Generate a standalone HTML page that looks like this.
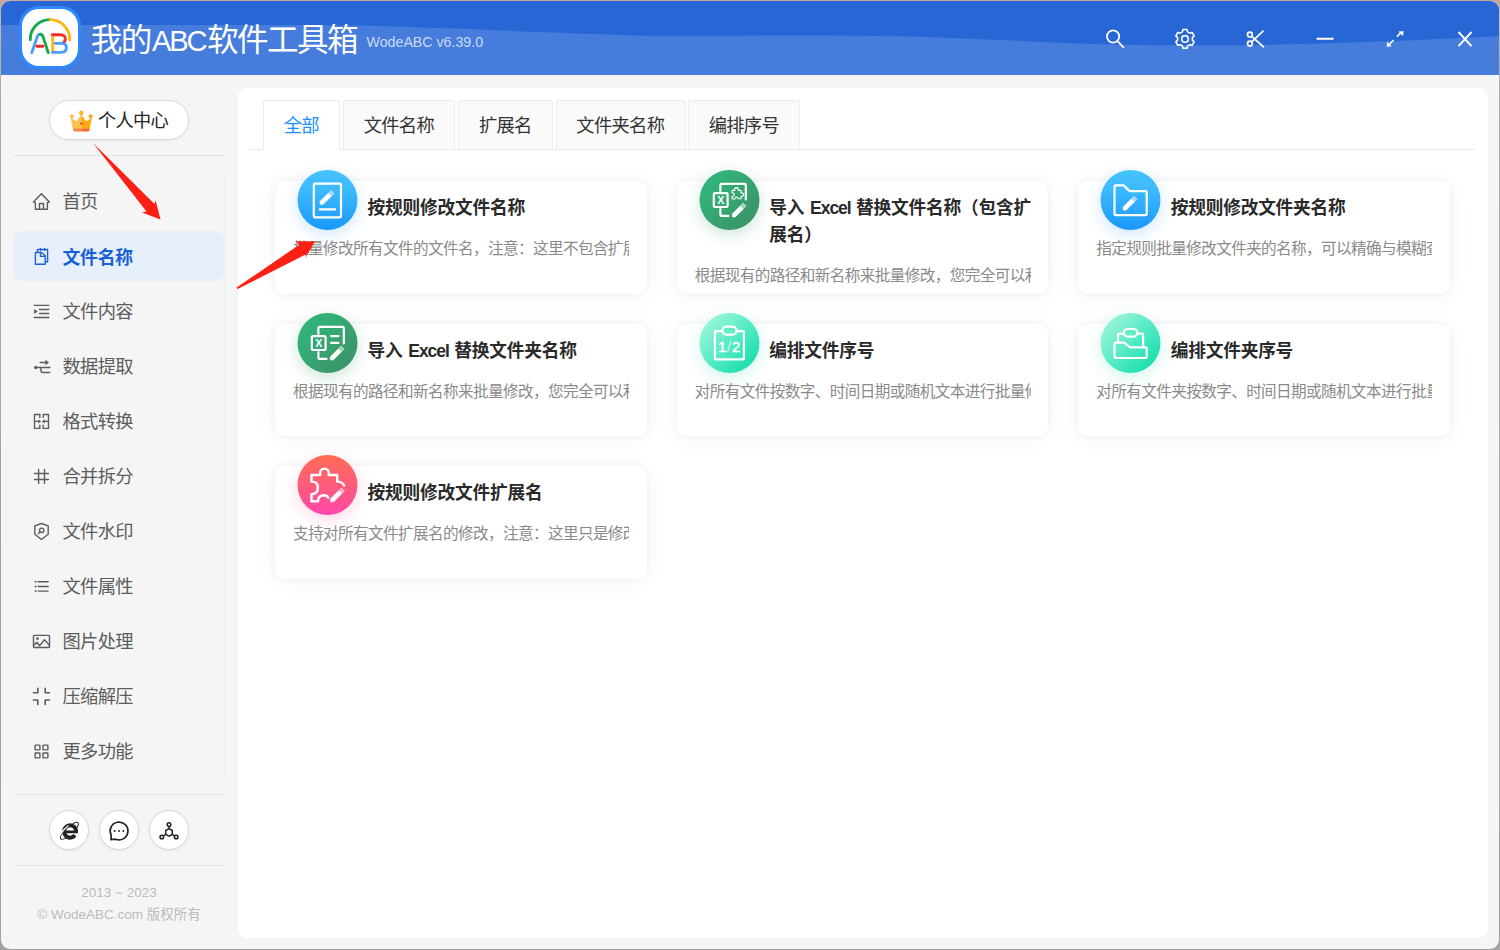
<!DOCTYPE html>
<html lang="zh-CN">
<head>
<meta charset="utf-8">
<title>我的ABC软件工具箱</title>
<style>
*{box-sizing:border-box;margin:0;padding:0}
html,body{width:1500px;height:950px;overflow:hidden}
body{background:linear-gradient(180deg,#c6a7a0 0,#c6a7a0 10px,#c8b9a8 14px,#aaa6a2 120px,#a2a2a2 100%);font-family:"Liberation Sans","Noto Sans CJK SC",sans-serif;position:relative;color:#333}
.abs{position:absolute}
#win{position:absolute;left:1px;top:1px;width:1498px;height:948px;background:#f5f5f5;border-radius:9px;overflow:hidden}
#hdr{position:absolute;left:0;top:0;width:1498px;height:74px;background:#2866d6;overflow:hidden}
#hdr svg.wave{position:absolute;left:0;top:0}
#logo{position:absolute;left:18px;top:5px;width:62px;height:63px;border-radius:20px;background:#2f89fc}
#logo .in{position:absolute;left:3px;top:3px;right:3px;bottom:3px;border-radius:17px;background:#fdfdfe}
#ttl{position:absolute;left:89.8px;top:17px;height:44px;line-height:44px;font-size:31.6px;letter-spacing:-1.6px;color:#fff;white-space:nowrap}
#ttl .l{font-size:29.2px;letter-spacing:-2.2px;margin-left:1.2px;margin-right:1.7px}
#ver{position:absolute;left:365.6px;top:30.7px;font-size:14.2px;line-height:20px;color:#c9d9f5;white-space:nowrap}
.hi{position:absolute;top:18px;width:40px;height:40px}
#pill{position:absolute;left:48px;top:99px;width:140px;height:40px;border:1px solid #dadada;border-radius:20px;background:#fff;box-shadow:0 1px 3px rgba(0,0,0,.05)}
#pill span{position:absolute;left:48px;top:1px;line-height:38px;font-size:18.2px;letter-spacing:-0.7px;color:#222;white-space:nowrap}
.hr{position:absolute;left:12px;width:212px;height:1px;background:#e4e4e4}
.nav{position:absolute;left:12px;width:211px;height:50px;border-radius:9px}
.nav.on{background:#e8effc}
.nav span{position:absolute;left:49.5px;top:1px;line-height:50px;font-size:18.3px;letter-spacing:-0.7px;color:#5c5c5c;white-space:nowrap}
.nav.on span{color:#1761d6;font-weight:700;font-size:17.8px;letter-spacing:-0.2px;top:1.5px}
.nav svg{position:absolute;left:18px;top:15px;width:20px;height:20px;fill:none;stroke:#5a5d62;stroke-width:1.4}
.nav.on svg{stroke:#1f62d0}
.circ{position:absolute;top:809px;width:40px;height:40px;border-radius:50%;background:#fff;border:1px solid #d8d8d8;box-shadow:0 1px 3px rgba(0,0,0,.06)}
.foot{position:absolute;left:12px;width:212px;text-align:center;font-size:13.5px;color:#bbb;white-space:nowrap;line-height:20px}
#vline{position:absolute;left:223px;top:170px;width:1px;height:608px;background:#efefef}
#main{position:absolute;left:237px;top:87px;width:1250px;height:850px;background:#fff;border-radius:9px}
.tab{position:absolute;top:99px;height:49px;border:1px solid #ededed;border-bottom:none;background:#fafafa;font-size:18.3px;letter-spacing:-0.7px;text-indent:-0.4px;line-height:50px;text-align:center;color:#333;border-radius:3px 3px 0 0;white-space:nowrap}
.tab.on{background:#fff;color:#1e8fff;height:50px;border-color:#ebebeb}
#tabline{position:absolute;left:249px;top:148px;width:1226px;height:1px;background:#ebebeb}
.card{position:absolute;width:371.7px;height:112.6px;background:#fff;border-radius:10px;box-shadow:0 0 8px rgba(0,0,0,.05),0 2px 26px rgba(0,0,0,.04)}
.card .t{position:absolute;left:92.5px;top:14.4px;width:268px;font-size:17.7px;letter-spacing:-0.2px;line-height:27px;font-weight:700;color:#2a2a2a}
.card .t .e{letter-spacing:-1.05px;font-size:17.5px;margin:0 0.8px 0 1.1px}
.card .d{position:absolute;left:18px;width:336px;font-size:15.6px;letter-spacing:-0.6px;line-height:20px;color:#8a8a8a;white-space:nowrap;overflow:hidden}
.ic{position:absolute;left:22px;transform:translateX(0.5px);top:-11px;width:60px;height:60px;border-radius:50%}
.ic svg{position:absolute;left:0;top:0;width:60px;height:60px}
.ic.blue{background:linear-gradient(180deg,#47c3ff 0%,#3cb8fe 35%,#1a98fc 100%);box-shadow:0 5px 16px rgba(40,150,250,.22)}
.ic.green{background:linear-gradient(135deg,#2fba7f 0%,#35a873 45%,#3c8d62 100%);box-shadow:0 5px 16px rgba(50,150,100,.24)}
.ic.mint{background:linear-gradient(135deg,#b0f8e3 0%,#7cf0d1 30%,#48e8c1 58%,#10dba7 96%);box-shadow:0 5px 16px rgba(40,220,170,.22)}
.ic.pink{background:linear-gradient(180deg,#ff6b54 0%,#ff5c7a 50%,#ff46ac 100%);box-shadow:0 5px 16px rgba(255,80,140,.22)}
</style>
</head>
<body>
<div id="win">
  <div id="hdr">
    <svg class="wave" width="1498" height="74" viewBox="0 0 1498 74"><path d="M0.0,24.0 C33.2,24.0 142.5,24.0 199.0,24.0 C255.5,24.0 299.0,23.7 339.0,24.2 C379.0,24.7 405.7,25.9 439.0,27.0 C472.3,28.1 505.7,29.8 539.0,31.0 C572.3,32.2 609.0,33.8 639.0,34.4 C669.0,35.0 692.3,34.8 719.0,34.8 C745.7,34.8 769.0,34.3 799.0,34.4 C829.0,34.5 865.7,34.5 899.0,35.3 C932.3,36.1 965.7,37.7 999.0,39.0 C1032.3,40.3 1065.7,42.3 1099.0,43.2 C1132.3,44.1 1165.7,44.6 1199.0,44.6 C1232.3,44.6 1265.7,43.8 1299.0,43.0 C1332.3,42.2 1365.8,41.1 1399.0,39.8 C1432.2,38.5 1481.5,35.8 1498.0,35.0 L1498,74 L0,74 Z" fill="#467cdc"/></svg>
    <div id="logo"><div class="in"></div><svg class="abs" style="left:0;top:0" width="62" height="63" viewBox="0 0 62 63" fill="none" stroke-width="2.9" stroke-linecap="round" stroke-linejoin="round">
<path d="M11.3,33.8 A19.7,19.7 0 0 1 31,13.6" stroke="#14a84b"/>
<path d="M31,13.6 A19.7,19.7 0 0 1 50.7,33.8" stroke="#fbb815"/>
<path d="M12.8,46.6 L18.4,30.4 Q19.6,27.9 21.2,28.2" stroke="#4a9dff"/>
<path d="M21.2,28.2 Q23,28 24,30.6 L29.2,46.6" stroke="#17a84c"/>
<path d="M18,40.2 H23.8" stroke="#fb2222"/>
<path d="M33.7,29.4 V46" stroke="#fbb815"/>
<path d="M33.4,28.8 H41 Q46.6,28.9 46.3,33.2 Q46,36 44.4,36.6" stroke="#fb2a2a"/>
<path d="M36.3,37.4 H42.6 Q47.6,37.6 47.4,42 Q47.2,46.4 42,46.4 H33.6" stroke="#4a9dff"/>
</svg></div>
    <div id="ttl">我的<span class="l">ABC</span>软件工具箱</div>
    <div id="ver">WodeABC v6.39.0</div>

    <svg class="hi" style="left:1094px" viewBox="0 0 40 40" fill="none" stroke="#fff" stroke-width="1.8" stroke-linecap="round"><circle cx="18.1" cy="17.5" r="6.1"/><path d="M22.6,22.1 L28.4,28.3"/></svg>
    <svg class="hi" style="left:1164px" viewBox="0 0 40 40" fill="none" stroke="#fff" stroke-width="1.6" stroke-linejoin="round"><circle cx="20" cy="19.9" r="3.3"/><path d="M22.00,10.51 L18.00,10.51 L17.43,12.85 L15.18,14.15 L12.87,13.48 L10.87,16.93 L12.61,18.60 L12.61,21.20 L10.87,22.87 L12.87,26.32 L15.18,25.65 L17.43,26.95 L18.00,29.29 L22.00,29.29 L22.57,26.95 L24.82,25.65 L27.13,26.32 L29.13,22.87 L27.39,21.20 L27.39,18.60 L29.13,16.93 L27.13,13.48 L24.82,14.15 L22.57,12.85 Z"/></svg>
    <svg class="hi" style="left:1234px" viewBox="0 0 40 40" fill="none" stroke="#fff" stroke-width="1.75" stroke-linecap="round"><circle cx="14.9" cy="15.6" r="2.4"/><circle cx="14.9" cy="24.6" r="2.4"/><path d="M16.7,17.3 L28.5,27.9 M16.7,22.9 L28,12.2"/></svg>
    <svg class="hi" style="left:1304px" viewBox="0 0 40 40" fill="none" stroke="#fff" stroke-width="2"><path d="M11.6,19.8 H28.5"/></svg>
    <svg class="hi" style="left:1374px" viewBox="0 0 40 40" fill="#fff" stroke="#fff" stroke-width="1.6"><path d="M21.8,17.8 L26,13.6 M18.6,21 L14.4,25.2" fill="none"/><path d="M24,12.8 L28.2,12.4 L27.8,16.6 Z M12.4,23.2 L12,27.4 L16.2,27 Z" stroke-width="0.6"/></svg>
    <svg class="hi" style="left:1444px" viewBox="0 0 40 40" fill="none" stroke="#fff" stroke-width="1.9"><path d="M13.5,13 L26.5,27.2 M26.5,13 L13.5,27.2"/></svg>
  </div>

  <div id="pill"><svg class="abs" style="left:19px;top:9px" width="24" height="22" viewBox="0 0 24 22"><path d="M1.6,7.6 L7.4,11.6 L12.3,4.6 L12.3,18.8 L3.8,18.8 Z" fill="#fcc250"/><path d="M12.3,4.6 L17.2,11.6 L23,7.6 L20.8,18.8 L12.3,18.8 Z" fill="#ffaa0c"/><path d="M3.8,18.6 H12.3 V21.4 H6 Q4.2,21.4 4,20 Z" fill="#f8853e"/><path d="M12.3,18.6 H20.8 L20.6,20 Q20.4,21.4 18.6,21.4 H12.3 Z" fill="#f26a2a"/><circle cx="2.9" cy="6.3" r="2" fill="#fcc250"/><circle cx="12.3" cy="2.9" r="2.3" fill="#fdb52c"/><circle cx="21.7" cy="6.3" r="2" fill="#ffaa0c"/><ellipse cx="12.3" cy="13.4" rx="1.3" ry="1" fill="#e8392c"/></svg><span>个人中心</span></div>
  <div class="hr" style="top:154px"></div>
  <div id="vline"></div>
  <div class="nav" style="top:175px"><svg viewBox="0 0 20 20"><path d="M4.4,18.2 V11.7 L2.4,11.1 L10.4,2.7 L18.4,11.1 L16.4,11.7 V18.2 Z M8.5,18.2 V12.5 H12.5 V18.2" stroke-linejoin="round"/></svg><span>首页</span></div>
  <div class="nav on" style="top:230px"><svg viewBox="0 0 20 20"><path d="M4.4,6.5 H10.7 L14.2,9.8 V18.3 H4.4 Z M9.5,6.5 V10.4 H14.2 M6.5,6.5 V3.5 H16.6 V15.8 H14.2 M9.5,2.4 V4.6 M13.6,2.4 V4.6" stroke-linejoin="round" stroke-linecap="round"/></svg><span>文件名称</span></div>
  <div class="nav" style="top:285px"><svg viewBox="0 0 20 20"><path d="M3.2,4.4 H17.8 M8.5,8.5 H17.8 M8.5,12.5 H17.8 M3.2,16.5 H17.8" stroke-linecap="round"/><path d="M3.2,7.9 V12.9 L6.8,10.4 Z" fill="#5a5d62" stroke="none"/></svg><span>文件内容</span></div>
  <div class="nav" style="top:340px"><svg viewBox="0 0 20 20"><circle cx="4.7" cy="11.5" r="1.7" fill="#5a5d62" stroke="none"/><path d="M4.7,11.5 H18.9 M9.9,11.5 V14.3 Q9.9,16.5 12.2,16.5 H18.9 M9.2,6.5 H15" stroke-linecap="round"/><path d="M14.4,3.8 V9.3 L18,6.5 Z" fill="#5a5d62" stroke="none"/></svg><span>数据提取</span></div>
  <div class="nav" style="top:395px"><svg viewBox="0 0 20 20"><path d="M8.8,6.6 V3.5 H3.5 V17.4 H8.8 V14.2 M3.5,10.4 H8 M12.2,6.6 V3.5 H17.5 V17.4 H12.2 V14.2 M17.5,10.4 H13" stroke-linejoin="round" stroke-linecap="round"/><path d="M7.3,8.2 V12.6 L10.1,10.4 Z M13.7,8.2 V12.6 L10.9,10.4 Z" fill="#5a5d62" stroke="none"/></svg><span>格式转换</span></div>
  <div class="nav" style="top:450px"><svg viewBox="0 0 20 20"><path d="M7.6,3.5 V17.4 M13.5,3.5 V17.4 M3.5,7.5 H17.4 M3.5,13.5 H17.4" stroke-linecap="round"/></svg><span>合并拆分</span></div>
  <div class="nav" style="top:505px"><svg viewBox="0 0 20 20"><path d="M10.4,2.5 L17.2,4.8 V13.3 L10.4,18.5 L3.8,13.3 V4.8 Z" stroke-linejoin="round"/><circle cx="10.7" cy="9.3" r="2.2"/><path d="M9.1,10.9 L7.3,12.8" stroke-linecap="round"/></svg><span>文件水印</span></div>
  <div class="nav" style="top:560px"><svg viewBox="0 0 20 20"><path d="M7.1,5.75 H17.2 M7.1,10.5 H17.2 M7.1,15.1 H17.2" stroke-linecap="round"/><circle cx="4.6" cy="5.75" r="1" fill="#5a5d62" stroke="none"/><circle cx="4.6" cy="10.5" r="1" fill="#5a5d62" stroke="none"/><circle cx="4.6" cy="15.1" r="1" fill="#5a5d62" stroke="none"/></svg><span>文件属性</span></div>
  <div class="nav" style="top:615px"><svg viewBox="0 0 20 20"><rect x="2.5" y="4.4" width="16" height="12.1" rx="0.8"/><circle cx="6.5" cy="7.6" r="1.4" fill="#5a5d62" stroke="none"/><path d="M2.5,14.5 L5.8,11.2 L8.5,14.7 L13.5,8.7 L18.5,14.5" stroke-linejoin="round"/></svg><span>图片处理</span></div>
  <div class="nav" style="top:670px"><svg viewBox="0 0 20 20"><path d="M6.8,2.4 V6.8 H2.4 M14.2,2.4 V6.8 H18.5 M2.4,14 H6.8 V18.5 M18.5,14 H14.2 V18.5" stroke-linecap="round" stroke-linejoin="round" stroke-width="1.6"/></svg><span>压缩解压</span></div>
  <div class="nav" style="top:725px"><svg viewBox="0 0 20 20"><rect x="4.1" y="4.1" width="4.8" height="4.8" rx="0.3"/><rect x="12" y="4.1" width="4.9" height="4.8" rx="0.3"/><rect x="4.1" y="12" width="4.8" height="4.9" rx="0.3"/><rect x="12" y="12" width="4.9" height="4.9" rx="0.3"/></svg><span>更多功能</span></div>

  <div class="hr" style="top:793px"></div>
  <div class="circ" style="left:48px"><svg class="abs" style="left:-1px;top:-1px" width="40" height="40" viewBox="0 0 40 40" fill="none" stroke="#222"><g transform="translate(20.4 20.8) rotate(-43)"><path d="M-5,-3.35 A11.8,3.7 0 0 0 -5,3.35 M7,-2.98 A11.8,3.7 0 0 1 7,2.98" stroke-width="1"/></g><path d="M29,21.9 H15.6" stroke-width="2.7"/><path d="M27.1,21.6 A6,6.2 0 1 0 25.9,25.2" stroke-width="3.9"/><g transform="translate(20.4 20.8) rotate(-43)"><path d="M-9,-3.3 A11.8,3.7 0 0 1 3,-4.5" stroke="#fff" stroke-width="1.1"/></g></svg></div>
  <div class="circ" style="left:98px"><svg class="abs" style="left:-1px;top:-1px" width="40" height="40" viewBox="0 0 40 40" fill="none" stroke="#222" stroke-width="1.7" stroke-linejoin="round"><path d="M12,29.6 L12.2,25.2 A8.9,8.9 0 1 1 16.6,29.2 Z"/><circle cx="15.6" cy="21" r="1" fill="#222" stroke="none"/><circle cx="20" cy="21" r="1" fill="#222" stroke="none"/><circle cx="24.4" cy="21" r="1" fill="#222" stroke="none"/></svg></div>
  <div class="circ" style="left:148px"><svg class="abs" style="left:-1px;top:-1px" width="40" height="40" viewBox="0 0 40 40" fill="none" stroke="#222" stroke-width="1.5" stroke-linejoin="round"><path d="M20,18.6 L23.3,20.5 V24.3 L20,26.2 L16.7,24.3 V20.5 Z M20,18.6 V16.4 M23.3,24.3 L25.6,25.8 M16.7,24.3 L14.4,25.8"/><circle cx="20" cy="14.6" r="1.8"/><circle cx="27.2" cy="27" r="1.8"/><circle cx="12.8" cy="27" r="1.8"/></svg></div>
  <div class="hr" style="top:864px"></div>
  <div class="foot" style="top:882px">2013 ~ 2023</div>
  <div class="foot" style="top:904px">© WodeABC.com 版权所有</div>

  <div id="main"></div>
  <div id="tabline"></div>
  <div class="tab on" style="left:262px;width:77px">全部</div>
  <div class="tab" style="left:342px;width:112px">文件名称</div>
  <div class="tab" style="left:457px;width:95px">扩展名</div>
  <div class="tab" style="left:554.5px;width:130px">文件夹名称</div>
  <div class="tab" style="left:687px;width:112px">编排序号</div>

  <div class="card" style="left:274px;top:180px"><div class="ic blue"><svg viewBox="0 0 60 60"><rect x="16.3" y="13.7" width="27.2" height="33.6" rx="1.2" fill="none" stroke="#fff" stroke-width="2.2" stroke-linejoin="round" stroke-linecap="round"/><path d="M22.3,39.4 H37.7" fill="none" stroke="#fff" stroke-width="2.2" stroke-linejoin="round" stroke-linecap="round"/><path d="M22.7,34.3 L22.7,31.3 L30.7,23.3 L33.7,26.3 L25.7,34.3 Z" fill="#fff" stroke="#fff" stroke-width="0.7" stroke-linejoin="round"/><path d="M31.1,22.9 L33.5,20.5 L36.5,23.5 L34.1,25.9 Z" fill="#fff" fill-opacity="0.5" stroke="#fff" stroke-opacity="0.5" stroke-width="1" stroke-linejoin="round"/></svg></div><div class="t">按规则修改文件名称</div><div class="d" style="top:58px">批量修改所有文件的文件名，注意：这里不包含扩展名</div></div>
  <div class="card" style="left:675.8px;top:180px"><div class="ic green"><svg viewBox="0 0 60 60"><path d="M20.9,21 V15.1 Q20.9,13.9 22.1,13.9 H45.1 Q46.3,13.9 46.3,15.1 V29.5 M20.9,39.2 V44.7 Q20.9,45.9 22.1,45.9 H29" fill="none" stroke="#fff" stroke-width="2.2" stroke-linejoin="round" stroke-linecap="round"/><rect x="14.3" y="23.2" width="13.8" height="13.8" rx="1.2" fill="none" stroke="#fff" stroke-width="2.2" stroke-linejoin="round" stroke-linecap="round"/><text x="21.2" y="33.9" text-anchor="middle" font-family="Liberation Sans,sans-serif" font-weight="700" font-size="10.5" fill="#fff">X</text><path d="M32.6,20.4 H35.3 Q34.6,17.8 37,17.6 Q39.4,17.8 38.7,20.4 H41.6 V23 Q43.9,22.4 44.1,24.6 Q43.9,26.8 41.6,26.2 V28.8 H38.6 Q38.2,26.8 36.6,27.2 Q35.4,27.6 35.4,29 H32.6 V26.4 Q34.6,26.8 34.8,24.7 Q34.6,22.6 32.6,23 Z" fill="none" stroke="#fff" stroke-width="1.1" stroke-linejoin="round"/><path d="M32.8,46.9 L32.8,43.9 L40.8,35.9 L43.8,38.9 L35.8,46.9 Z" fill="#fff" stroke="#fff" stroke-width="0.7" stroke-linejoin="round"/><path d="M41.2,35.5 L43.6,33.1 L46.6,36.1 L44.2,38.5 Z" fill="#fff" fill-opacity="0.5" stroke="#fff" stroke-opacity="0.5" stroke-width="1" stroke-linejoin="round"/></svg></div><div class="t">导入 <span class="e">Excel</span> 替换文件名称（包含扩展名）</div><div class="d" style="top:85px">根据现有的路径和新名称来批量修改，您完全可以利用</div></div>
  <div class="card" style="left:1077.2px;top:180px"><div class="ic blue"><svg viewBox="0 0 60 60"><path d="M15.2,15.4 H22.6 Q23.2,15.4 23.7,15.9 L28.6,20.6 Q29.1,21.1 29.8,21.1 H45 Q46.2,21.1 46.2,22.3 V43.9 Q46.2,45.1 45,45.1 H15.2 Q14,45.1 14,43.9 V16.6 Q14,15.4 15.2,15.4 Z" fill="none" stroke="#fff" stroke-width="2.2" stroke-linejoin="round" stroke-linecap="round"/><path d="M22.7,40.1 L22.7,37.1 L30.7,29.1 L33.7,32.1 L25.7,40.1 Z" fill="#fff" stroke="#fff" stroke-width="0.7" stroke-linejoin="round"/><path d="M31.1,28.7 L33.5,26.3 L36.5,29.3 L34.1,31.7 Z" fill="#fff" fill-opacity="0.5" stroke="#fff" stroke-opacity="0.5" stroke-width="1" stroke-linejoin="round"/></svg></div><div class="t">按规则修改文件夹名称</div><div class="d" style="top:58px">指定规则批量修改文件夹的名称，可以精确与模糊查找</div></div>
  <div class="card" style="left:274px;top:322.6px"><div class="ic green"><svg viewBox="0 0 60 60"><path d="M20.9,21 V15.1 Q20.9,13.9 22.1,13.9 H45.1 Q46.3,13.9 46.3,15.1 V30.4 M20.9,39.2 V44.7 Q20.9,45.9 22.1,45.9 H29" fill="none" stroke="#fff" stroke-width="2.2" stroke-linejoin="round" stroke-linecap="round"/><rect x="14.3" y="23.2" width="13.8" height="13.8" rx="1.2" fill="none" stroke="#fff" stroke-width="2.2" stroke-linejoin="round" stroke-linecap="round"/><text x="21.2" y="33.9" text-anchor="middle" font-family="Liberation Sans,sans-serif" font-weight="700" font-size="10.5" fill="#fff">X</text><path d="M33.6,23.1 H41 M33.6,29.9 H41" fill="none" stroke="#fff" stroke-width="2.2" stroke-linejoin="round" stroke-linecap="round"/><path d="M32.8,46.9 L32.8,43.9 L40.8,35.9 L43.8,38.9 L35.8,46.9 Z" fill="#fff" stroke="#fff" stroke-width="0.7" stroke-linejoin="round"/><path d="M41.2,35.5 L43.6,33.1 L46.6,36.1 L44.2,38.5 Z" fill="#fff" fill-opacity="0.5" stroke="#fff" stroke-opacity="0.5" stroke-width="1" stroke-linejoin="round"/></svg></div><div class="t">导入 <span class="e">Excel</span> 替换文件夹名称</div><div class="d" style="top:58px">根据现有的路径和新名称来批量修改，您完全可以利用</div></div>
  <div class="card" style="left:675.8px;top:322.6px"><div class="ic mint"><svg viewBox="0 0 60 60"><rect x="15.4" y="18.1" width="29" height="28.3" rx="1.2" fill="none" stroke="#fff" stroke-width="2.2" stroke-linejoin="round" stroke-linecap="round"/><rect x="23" y="13.7" width="14" height="7.9" rx="3.9" fill="#62eac6" stroke="#fff" stroke-width="2.2"/><text x="30" y="39.4" text-anchor="middle" font-family="Liberation Sans,sans-serif" font-weight="400" font-size="15" letter-spacing="0.7" fill="#fff" stroke="#fff" stroke-width="0.45">1<tspan fill-opacity="0.55" stroke-opacity="0.4">/</tspan>2</text></svg></div><div class="t">编排文件序号</div><div class="d" style="top:58px">对所有文件按数字、时间日期或随机文本进行批量修改</div></div>
  <div class="card" style="left:1077.2px;top:322.6px"><div class="ic mint"><svg viewBox="0 0 60 60"><path d="M17.5,29.4 V21.8 Q17.5,20.6 18.7,20.6 H41.4 Q42.6,20.6 42.6,21.8 V34" fill="none" stroke="#fff" stroke-width="2.2" stroke-linejoin="round" stroke-linecap="round"/><path d="M15.2,29.6 H23.4 Q24,29.6 24.5,30.1 L28.6,33.8 Q29.1,34.3 29.8,34.3 H45 Q46.2,34.3 46.2,35.5 V43.8 Q46.2,45 45,45 H15.2 Q14,45 14,43.8 V30.8 Q14,29.6 15.2,29.6 Z" fill="none" stroke="#fff" stroke-width="2.2" stroke-linejoin="round" stroke-linecap="round"/><rect x="23.4" y="16" width="13.4" height="7.6" rx="3.8" fill="#66ebc8" stroke="#fff" stroke-width="2.2"/></svg></div><div class="t">编排文件夹序号</div><div class="d" style="top:58px">对所有文件夹按数字、时间日期或随机文本进行批量修改</div></div>
  <div class="card" style="left:274px;top:465px"><div class="ic pink"><svg viewBox="0 0 60 60"><path d="M46.6,30.6 Q44.6,26.4 39.7,26.6 V20 H31.2 Q32.2,13.9 26.9,13.6 Q21.8,13.9 22.7,20 H14 V26.6 Q20.4,26.4 20.4,32.8 Q20.4,39 14,39.2 V46.2 H20.6 Q20.4,40.6 26.2,40.3 Q29.6,40.4 30.8,42.8" fill="none" stroke="#fff" stroke-width="2.4" stroke-linejoin="round" stroke-linecap="round"/><path d="M33.1,46.8 L33.1,43.8 L41.1,35.8 L44.1,38.8 L36.1,46.8 Z" fill="#fff" stroke="#fff" stroke-width="0.7" stroke-linejoin="round"/><path d="M41.5,35.4 L43.9,33.0 L46.9,36.0 L44.5,38.4 Z" fill="#fff" fill-opacity="0.5" stroke="#fff" stroke-opacity="0.5" stroke-width="1" stroke-linejoin="round"/></svg></div><div class="t">按规则修改文件扩展名</div><div class="d" style="top:58px">支持对所有文件扩展名的修改，注意：这里只是修改</div></div>

  <svg class="abs" style="left:-1px;top:-1px;pointer-events:none" width="1500" height="950" viewBox="0 0 1500 950"><path d="M93,143 L154.5,204 L155.5,200 L160.5,219.5 L142,212.5 L146.5,211.5 Z M236.6,287.6 L299.3,244.7 L296,241.2 L315.1,241.2 L305.2,258.4 L306.6,254 L237.6,289 Z" fill="#ff2015"/></svg>
</div>
</body>
</html>
